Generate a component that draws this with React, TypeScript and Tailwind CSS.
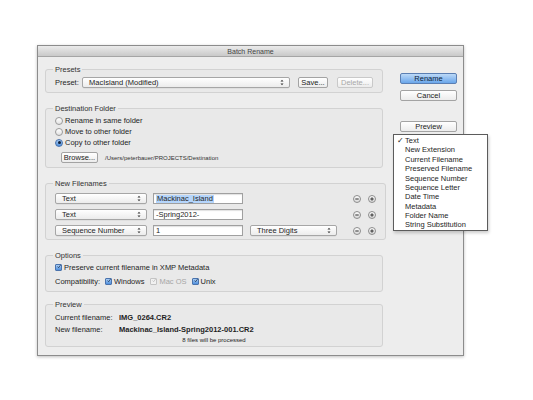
import React from 'react';

function Stepper() {
  return (
    <svg width="4" height="7" viewBox="0 0 4 7" className="shrink-0">
      <path d="M0.5 2.6 L2 0.8 L3.5 2.6 Z" fill="#333" />
      <path d="M0.5 4.4 L2 6.2 L3.5 4.4 Z" fill="#333" />
    </svg>
  );
}

function Select({ label, width }: { label: string; width: string }) {
  return (
    <div
      className={`${width} flex h-[11px] shrink-0 items-center justify-between rounded-[2px] border border-[#a6a6a6] bg-gradient-to-b from-[#ffffff] to-[#ececec] pl-[6px] pr-[5px] shadow-[0_0.5px_0_rgba(0,0,0,0.08)]`}
    >
      <span className="leading-none">{label}</span>
      <Stepper />
    </div>
  );
}

function Button({ label, width, disabled = false }: { label: string; width: string; disabled?: boolean }) {
  return (
    <div
      className={`${width} flex h-[11px] shrink-0 items-center justify-center rounded-[2px] border bg-gradient-to-b from-[#ffffff] to-[#ececec] leading-none ${
        disabled ? 'border-[#c9c9c9] text-[#a8a8a8]' : 'border-[#a3a3a3] text-[#222]'
      }`}
    >
      {label}
    </div>
  );
}

function Radio({ label, checked = false }: { label: string; checked?: boolean }) {
  return (
    <div className="flex h-[11px] items-center gap-[2px]">
      {checked ? (
        <span className="flex h-[8px] w-[8px] items-center justify-center rounded-full border border-[#4a73ad] bg-gradient-to-b from-[#a9cdf5] to-[#4f8fdb]">
          <span className="h-[3px] w-[3px] rounded-full bg-[#10203a]" />
        </span>
      ) : (
        <span className="h-[8px] w-[8px] rounded-full border border-[#9a9a9a] bg-gradient-to-b from-[#ffffff] to-[#e2e2e2]" />
      )}
      <span className="leading-none">{label}</span>
    </div>
  );
}

function Check({ disabled = false }: { disabled?: boolean }) {
  return (
    <span
      className={`flex h-[7px] w-[7px] shrink-0 items-center justify-center rounded-[1px] border ${
        disabled ? 'border-[#c4c4c4] bg-[#f1f1f1]' : 'border-[#4a73ad] bg-gradient-to-b from-[#a9cdf5] to-[#4f8fdb]'
      }`}
    >
      <svg width="7" height="7" viewBox="0 0 7 7" className="-mt-[2px] ml-[1px]">
        <path
          d="M1 3.6 L2.8 5.6 L6.6 0.6"
          fill="none"
          stroke={disabled ? '#b0b0b0' : '#0f1d33'}
          strokeWidth="1.1"
        />
      </svg>
    </span>
  );
}

function RoundIcon({ plus = false }: { plus?: boolean }) {
  return (
    <span className="flex h-[8px] w-[8px] items-center justify-center rounded-full border border-[#8d8d8d] bg-gradient-to-b from-[#fdfdfd] to-[#d8d8d8]">
      <svg width="6" height="6" viewBox="0 0 6 6">
        <path d="M1.3 3 H4.7" stroke="#333" strokeWidth="1" />
        {plus && <path d="M3 1.3 V4.7" stroke="#333" strokeWidth="1" />}
      </svg>
    </span>
  );
}

function Group({ title, className = '', children }: { title: string; className?: string; children: React.ReactNode }) {
  return (
    <fieldset className={`rounded-[3px] border border-[#d2d2d2] bg-[#e9e9e9] px-[9px] ${className}`}>
      <legend className="-ml-[2px] px-[2px] leading-[9px] text-[#333]">{title}</legend>
      {children}
    </fieldset>
  );
}

const menuItems = [
  'Text',
  'New Extension',
  'Current Filename',
  'Preserved Filename',
  'Sequence Number',
  'Sequence Letter',
  'Date Time',
  'Metadata',
  'Folder Name',
  'String Substitution',
];

export default function App() {
  return (
    <div className="min-h-screen bg-white font-['Liberation_Sans',Arial,sans-serif] text-[7.5px] text-[#1e1e1e]">
      <div className="pl-[37px] pt-[45px]">
        <div className="relative w-[427px] border border-[#8c8c8c] bg-[#ededed] shadow-[0_1px_3px_rgba(0,0,0,0.25)]">
          <div className="flex h-[11px] items-center justify-center border-b border-[#a5a5a5] bg-gradient-to-b from-[#ebebeb] to-[#c9c9c9] text-[7px] leading-none text-[#444]">
            Batch Rename
          </div>

          <div className="flex pb-[8px] pl-[7px] pr-[5px] pt-[8px]">
            <div className="flex w-[338px] flex-col">
              <Group title="Presets" className="pb-[4px] pt-[3px]">
                <div className="flex items-center">
                  <span className="w-[27px] leading-none">Preset:</span>
                  <Select label="MacIsland (Modified)" width="w-[208px]" />
                  <div className="ml-[8px]">
                    <Button label="Save..." width="w-[30px]" />
                  </div>
                  <div className="ml-[9px]">
                    <Button label="Delete..." width="w-[36px]" disabled />
                  </div>
                </div>
              </Group>

              <Group title="Destination Folder" className="mt-[11px] pb-[4px] pt-[2px]">
                <Radio label="Rename in same folder" />
                <Radio label="Move to other folder" />
                <Radio label="Copy to other folder" checked />
                <div className="mt-[4px] flex items-center pl-[6px]">
                  <Button label="Browse..." width="w-[37px]" />
                  <span className="ml-[7px] text-[6px] leading-none text-[#333]">
                    /Users/peterbauer/PROJECTS/Destination
                  </span>
                </div>
              </Group>

              <Group title="New Filenames" className="mt-[11px] pb-[3px] pt-[5px]">
                <div className="flex flex-col gap-[5px]">
                  {[
                    { type: 'Text', value: 'Mackinac_Island', selected: true, extra: false },
                    { type: 'Text', value: '-Spring2012-', selected: false, extra: false },
                    { type: 'Sequence Number', value: '1', selected: false, extra: true },
                  ].map((row, i) => (
                    <div key={i} className="flex h-[11px] items-center">
                      <Select label={row.type} width="w-[92px]" />
                      <div className="ml-[6px] flex h-[11px] w-[90px] items-center border border-[#a0a0a0] bg-white pl-[2px] shadow-[inset_0_1px_1px_rgba(0,0,0,0.12)]">
                        <span className={`leading-[8px] ${row.selected ? 'bg-[#b5d5fb] px-[1px]' : ''}`}>{row.value}</span>
                      </div>
                      <div className="ml-[7px] w-[87px]">
                        {row.extra && <Select label="Three Digits" width="w-[87px]" />}
                      </div>
                      <div className="ml-[16px] flex items-center gap-[7px]">
                        <RoundIcon />
                        <RoundIcon plus />
                      </div>
                    </div>
                  ))}
                </div>
              </Group>

              <Group title="Options" className="mt-[11px] pb-[4px] pt-[2px]">
                <div className="flex h-[11px] items-center gap-[2px]">
                  <Check />
                  <span className="leading-none">Preserve current filename in XMP Metadata</span>
                </div>
                <div className="mt-[3px] flex h-[11px] items-center">
                  <span className="leading-none">Compatibility:</span>
                  <div className="ml-[5px] flex items-center gap-[2px]">
                    <Check />
                    <span className="leading-none">Windows</span>
                  </div>
                  <div className="ml-[6px] flex items-center gap-[2px]">
                    <Check disabled />
                    <span className="leading-none text-[#a6a6a6]">Mac OS</span>
                  </div>
                  <div className="ml-[5px] flex items-center gap-[2px]">
                    <Check />
                    <span className="leading-none">Unix</span>
                  </div>
                </div>
              </Group>

              <Group title="Preview" className="mt-[8px] pb-[1px] pt-[3px]">
                <div className="flex h-[11px] items-center">
                  <span className="w-[64px] leading-none">Current filename:</span>
                  <span className="font-bold leading-none">IMG_0264.CR2</span>
                </div>
                <div className="mt-[1px] flex h-[11px] items-center">
                  <span className="w-[64px] leading-none">New filename:</span>
                  <span className="font-bold leading-none">Mackinac_Island-Spring2012-001.CR2</span>
                </div>
                <div className="flex h-[10px] items-center justify-center text-[6px] leading-none">
                  8 files will be processed
                </div>
              </Group>
            </div>

            <div className="ml-[17px] flex w-[57px] flex-col">
              <div className="mt-[8px] flex h-[11px] items-center justify-center rounded-[2px] border border-[#5b7fb3] bg-gradient-to-b from-[#bcd9f7] to-[#6aa6ea] leading-none text-[#0e1f3b]">
                Rename
              </div>
              <div className="mt-[6px]">
                <Button label="Cancel" width="w-[57px]" />
              </div>
              <div className="mt-[20px]">
                <Button label="Preview" width="w-[57px]" />
              </div>
            </div>
          </div>

          <div className="absolute left-[355px] top-[88px] h-[97px] w-[95px] border border-[#5c5c5c] bg-white pt-[1px] shadow-[1px_2px_3px_rgba(0,0,0,0.2)]">
            {menuItems.map((item, i) => (
              <div key={item} className="flex h-[9.4px] items-center pl-[3px] leading-none">
                <span className="w-[8px]">{i === 0 ? '✓' : ''}</span>
                <span>{item}</span>
              </div>
            ))}
          </div>
        </div>
      </div>
    </div>
  );
}
